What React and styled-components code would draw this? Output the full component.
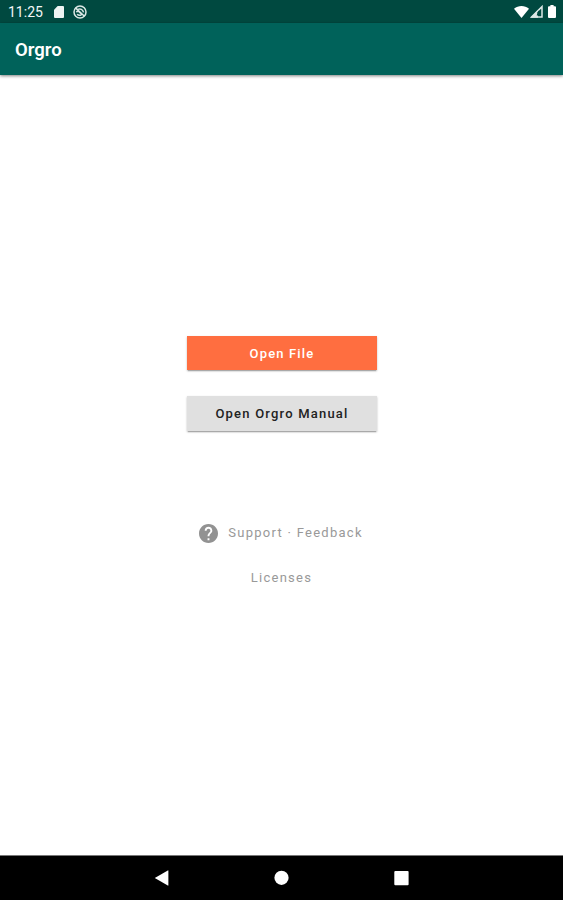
import React from "react";
import styled, { createGlobalStyle } from "styled-components";

const GlobalStyle = createGlobalStyle`
  * { box-sizing: border-box; }
  body { margin: 0; background: #fff; font-family: Roboto, sans-serif; }
  svg { display: block; flex: none; }
  button { font: inherit; border: 0; padding: 0; background: none; }
`;

const Screen = styled.div`
  height: 900px;
  display: flex;
  flex-direction: column;
  background: #fff;
`;

const StatusBar = styled.div`
  height: 23px;
  flex: none;
  display: flex;
  align-items: center;
  padding: 0 7px 0 8px;
  background: #004940;
  color: #f3f7f6;
`;

const Clock = styled.span`
  width: 46px;
  font-size: 14px;
  line-height: 23px;
  font-weight: 400;
  padding-top: 1px;
`;

const StatusIcons = styled.div`
  display: flex;
  align-items: center;
  gap: ${(p) => p.$gap}px;
  margin-left: ${(p) => (p.$end ? "auto" : 0)};
`;

const BatterySlot = styled.span`
  margin-left: 4px;
`;

const AppBar = styled.header`
  height: 52px;
  flex: none;
  display: flex;
  align-items: center;
  padding: 2px 15px 0;
  background: #00625a;
  box-shadow: 0 1px 3px rgba(0, 0, 0, 0.5);
`;

const Title = styled.h1`
  margin: 0;
  font-size: 18.5px;
  line-height: 24px;
  font-weight: 600;
  color: #fff;
`;

const Content = styled.main`
  flex: 1;
  display: flex;
  flex-direction: column;
  align-items: center;
  padding-top: 261px;
`;

const RaisedButton = styled.button`
  width: 190px;
  height: ${(p) => (p.$primary ? 34 : 35)}px;
  margin: 0 0 ${(p) => (p.$primary ? 26 : 25)}px 1px;
  padding: ${(p) => (p.$primary ? "2px 0 0" : "2px 0 1px")};
  font-size: 13px;
  font-weight: 500;
  letter-spacing: ${(p) => p.$spacing}px;
  line-height: 32px;
  background: ${(p) => (p.$primary ? "#ff6e40" : "#e0e0e0")};
  color: ${(p) => (p.$primary ? "#fff" : "#222")};
  box-shadow: 0 2px 1px -1px rgba(0, 0, 0, 0.2), 0 1px 2px rgba(0, 0, 0, 0.25);
`;

const Links = styled.nav`
  display: flex;
  flex-direction: column;
  align-items: center;
  gap: 25px;
  padding-top: 67px;
`;

const TextLink = styled.button`
  display: flex;
  align-items: center;
  gap: 10px;
  height: 20px;
  padding-right: ${(p) => (p.$withIcon ? 1 : 0)}px;
  font-size: 13px;
  line-height: 20px;
  letter-spacing: 1.27px;
  color: #999;
`;

const NavBar = styled.footer`
  height: 45px;
  flex: none;
  display: flex;
  align-items: center;
  justify-content: center;
  gap: 104px;
  border-top: 1px solid #777;
  background: #000;
`;

const SdCard = () => (
  <svg width="10" height="12" viewBox="0 0 10 12">
    <path fill="#eef4f3" d="M3.7 0H9a1 1 0 0 1 1 1v10a1 1 0 0 1-1 1H1a1 1 0 0 1-1-1V3.7z" />
  </svg>
);

const SyncDisabled = () => (
  <svg width="14" height="14" viewBox="0 0 14 14" fill="none" stroke="#dce8e6">
    <circle cx="7" cy="7" r="6" strokeWidth="1.5" />
    <path strokeWidth="1.5" d="M2.7 3.1 11.2 11M4.7 4.4c2.7-1.1 5.2-.1 5.8 3M3.4 7.2c.7-1 2-1.2 2.9-.3l2.9 2.8M4.1 9.3c1.3 1.2 2.8 1.3 4.2.5" />
  </svg>
);

const Wifi = () => (
  <svg width="15" height="12" viewBox="0 0 15 12">
    <path fill="#fff" d="M0 2.8C4.4-.9 10.6-.9 15 2.8L7.5 12z" />
  </svg>
);

const Signal = () => (
  <svg width="13" height="13" viewBox="0 0 13 13">
    <path fill="none" stroke="#dce8e6" strokeWidth="1.5" d="M1.5 12.1 12 1.6v10.5z" />
    <path fill="#dce8e6" d="M.5 12.7 8 5.2v7.5z" />
    <path fill="#004940" d="M7.5 7.2 9.3 5v5.6H6.7z" />
  </svg>
);

const Battery = () => (
  <svg width="8" height="13" viewBox="0 0 8 13">
    <path fill="#fff" d="M2.4 0h3.2v1.2H7a1 1 0 0 1 1 1V12a1 1 0 0 1-1 1H1a1 1 0 0 1-1-1V2.2a1 1 0 0 1 1-1h1.4z" />
  </svg>
);

const Help = () => (
  <svg width="19" height="19" viewBox="2 2 20 20">
    <path
      fill="#929292"
      d="M12 2C6.48 2 2 6.48 2 12s4.48 10 10 10 10-4.48 10-10S17.52 2 12 2zm1 17h-2v-2h2v2zm2.07-7.75l-.9.92C13.45 12.9 13 13.5 13 15h-2v-.5c0-1.1.45-2.1 1.17-2.83l1.24-1.26c.37-.36.59-.86.59-1.41 0-1.1-.9-2-2-2s-2 .9-2 2H8c0-2.21 1.79-4 4-4s4 1.79 4 4c0 .88-.36 1.68-.93 2.25z"
    />
  </svg>
);

const Back = () => (
  <svg width="16" height="16" viewBox="0 0 16 16">
    <path fill="#fff" d="M.8 8 13.8.4Q14.4.2 14.4 1v14q0 .8-.6.6z" />
  </svg>
);

const Home = () => (
  <svg width="16" height="16" viewBox="0 0 16 16">
    <circle cx="7.5" cy="7.8" r="7.1" fill="#fff" />
  </svg>
);

const Recents = () => (
  <svg width="16" height="16" viewBox="0 0 16 16">
    <rect x=".3" y=".9" width="14.3" height="14.4" rx="1" fill="#fff" />
  </svg>
);

export default function App() {
  return (
    <>
      <GlobalStyle />
      <Screen>
        <StatusBar>
          <Clock>11:25</Clock>
          <StatusIcons $gap={9}>
            <SdCard />
            <SyncDisabled />
          </StatusIcons>
          <StatusIcons $gap={1} $end>
            <Wifi />
            <Signal />
            <BatterySlot>
              <Battery />
            </BatterySlot>
          </StatusIcons>
        </StatusBar>
        <AppBar>
          <Title>Orgro</Title>
        </AppBar>
        <Content>
          <RaisedButton $primary $spacing={1.15}>Open File</RaisedButton>
          <RaisedButton $spacing={1.2}>Open Orgro Manual</RaisedButton>
          <Links>
            <TextLink $withIcon>
              <Help />
              Support · Feedback
            </TextLink>
            <TextLink>Licenses</TextLink>
          </Links>
        </Content>
        <NavBar>
          <Back />
          <Home />
          <Recents />
        </NavBar>
      </Screen>
    </>
  );
}
